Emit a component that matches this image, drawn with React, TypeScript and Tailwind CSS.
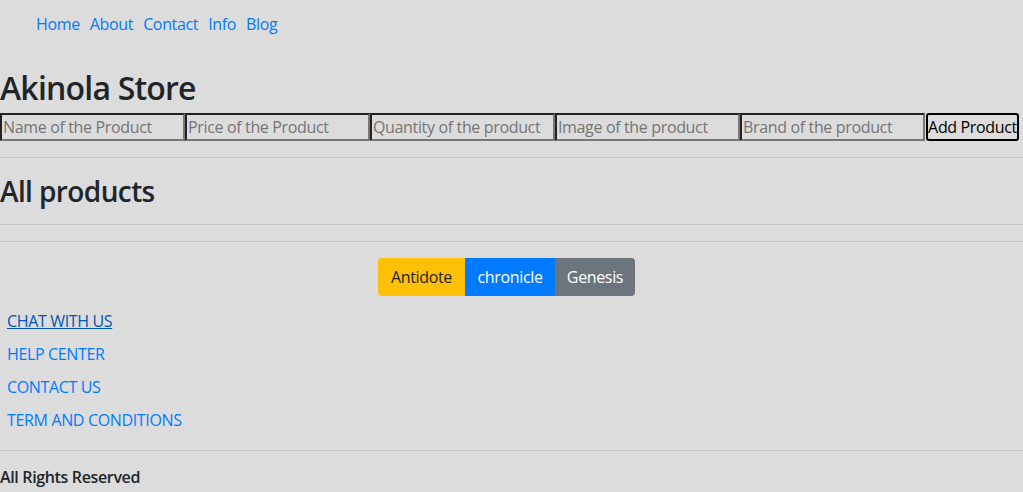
import React from "react"

const fields = [
  "Name of the Product",
  "Price of the Product",
  "Quantity of the product",
  "Image of the product",
  "Brand of the product",
]

const footerLinks = ["CHAT WITH US", "HELP CENTER", "CONTACT US", "TERM AND CONDITIONS"]

export default function App() {
  return (
    <div className="min-h-[492px] w-full bg-[#dcdcdc] text-[#212529] text-[16px] leading-[1.5] tracking-[-0.35px] font-['Open_Sans',sans-serif]">
      <nav className="flex gap-[10px] pl-[36px] pt-[12px] h-[60px]">
        {["Home", "About", "Contact", "Info", "Blog"].map((l) => (
          <a key={l} href="#" className="text-[#007bff]">{l}</a>
        ))}
      </nav>

      <h2 className="text-[32px] font-semibold leading-[1.2] mt-[9px] mb-[6px] tracking-[-0.8px]">Akinola Store</h2>

      <form className="flex items-center h-[28px]">
        {fields.map((f) => (
          <input
            key={f}
            placeholder={f}
            className="w-[185px] h-[28px] bg-transparent border-2 border-t-[#222] border-l-[#222] border-b-[#777] border-r-[#777] px-[1px] placeholder:text-[#757575] outline-none"
          />
        ))}
        <button type="button" className="ml-[1px] w-[93px] h-[28px] whitespace-nowrap border-2 border-black rounded-[3px] text-black">
          Add Product
        </button>
      </form>

      <hr className="mt-[16px] border-t border-[#c4c4c4]" />

      <h3 className="text-[28px] font-semibold leading-[1.2] mt-[17px] mb-[15px] tracking-[-0.6px]">All products</h3>

      <hr className="border-t border-[#c4c4c4]" />
      <hr className="mt-[16px] border-t border-[#c4c4c4]" />

      <div className="flex justify-center mt-[16px] pr-[10px]">
        <button className="h-[38px] w-[87px] bg-[#ffc107] text-[#212529] rounded-l-[4px]">Antidote</button>
        <button className="h-[38px] w-[90px] bg-[#007bff] text-white">chronicle</button>
        <button className="h-[38px] w-[80px] bg-[#6c757d] text-white rounded-r-[4px]">Genesis</button>
      </div>

      <ul className="pl-[7px] mt-[13px] flex flex-col gap-[9px]">
        {footerLinks.map((l, i) => (
          <li key={l}>
            <a href="#" className={i === 0 ? "text-[#0056b3] underline" : "text-[#007bff]"}>{l}</a>
          </li>
        ))}
      </ul>

      <hr className="mt-[18px] border-t border-[#c4c4c4]" />

      <p className="font-semibold mt-[14px]">All Rights Reserved</p>
    </div>
  )
}
